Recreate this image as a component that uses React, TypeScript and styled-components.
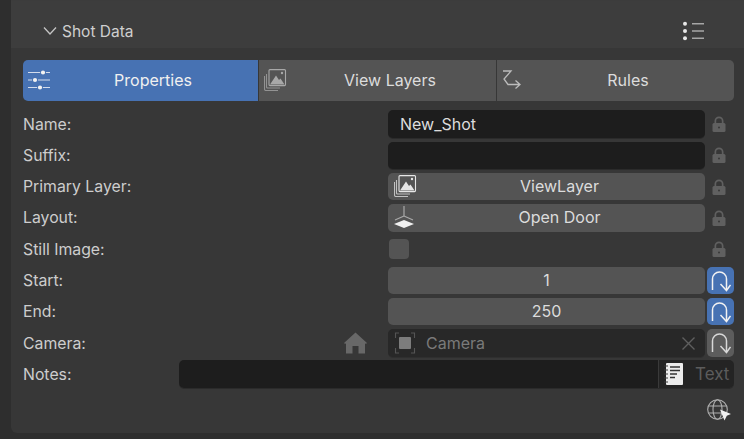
import React from 'react'
import styled, { createGlobalStyle } from 'styled-components'

const GlobalStyle = createGlobalStyle`
  html, body {
    margin: 0;
    padding: 0;
    background: #2e2e2e;
    overflow: hidden;
  }
  body {
    font-family: Inter, "Noto Sans", "Liberation Sans", sans-serif;
  }
`

const Page = styled.div`
  width: 744px;
  height: 439px;
  padding-left: 11px;
  box-sizing: border-box;
`

const Panel = styled.section`
  height: 433px;
  background: #373737;
  border-bottom-left-radius: 6px;
  border-top: 1px solid #3c3c3c;
  box-sizing: border-box;
`

const Header = styled.header`
  height: 47px;
  box-sizing: border-box;
  display: flex;
  align-items: center;
  background: #3d3d3d;
  padding: 13px 39px 0 32px;
  color: #cfcfcf;
  font-size: 15.5px;
  gap: 5px;
`

const HeaderTitle = styled.span`
  flex: 1;
`

const Body = styled.div`
  padding: 12px 10px 0 12px;
`

const Tabs = styled.div`
  display: grid;
  grid-template-columns: 235px 1fr 1fr;
  height: 41px;
  gap: 1px;
  margin-bottom: 9.4px;
`

const Tab = styled.div<{ $active?: boolean }>`
  display: grid;
  grid-template-columns: 20px 1fr;
  align-items: center;
  padding: 0 0 1px 5px;
  background: ${(p) => (p.$active ? '#4772b3' : '#545454')};
  color: ${(p) => (p.$active ? '#f0f0f0' : '#dcdcdc')};
  font-size: 16px;
  text-align: center;

  &:first-child {
    border-radius: 5px 0 0 5px;
  }
  &:last-child {
    border-radius: 0 5px 5px 0;
  }
`

const Rows = styled.div`
  display: flex;
  flex-direction: column;
  gap: 4px;
`

const Row = styled.div`
  display: grid;
  grid-template-columns: 365px 317px 1fr;
  height: 27.3px;
  align-items: center;
`

const NotesRow = styled.div`
  display: grid;
  grid-template-columns: 156px 1fr;
  height: 28px;
  margin-top: -0.5px;
  align-items: center;
`

const Label = styled.div`
  display: flex;
  justify-content: space-between;
  align-items: center;
  padding-right: 21px;
  color: #cdcdcd;
  font-size: 15.8px;
`

const TextField = styled.div`
  height: 100%;
  box-sizing: border-box;
  display: flex;
  align-items: center;
  padding: 0 12px 1px;
  background: #1d1d1d;
  border-radius: 5px;
  color: #dcdcdc;
  font-size: 16px;
  box-shadow: 0 1px 0 #2b2b2b;
`

const ButtonField = styled.div`
  height: 100%;
  box-sizing: border-box;
  display: grid;
  grid-template-columns: 20px 1fr;
  align-items: center;
  padding: 0 0 1px 6px;
  background: #545454;
  border-radius: 5px;
  color: #dcdcdc;
  font-size: 16px;
  text-align: center;
`

const NumberField = styled(ButtonField)`
  display: flex;
  justify-content: center;
  padding: 0 0 1px;
`

const CameraField = styled.div`
  height: 100%;
  box-sizing: border-box;
  display: flex;
  align-items: center;
  padding: 0 10px 0 6px;
  gap: 10px;
  background: #282828;
  border-radius: 5px;
  color: #7a7a7a;
  font-size: 16px;
  box-shadow: 0 1px 0 #2f2f2f;
`

const CameraName = styled.span`
  flex: 1;
`

const Checkbox = styled.div`
  width: 20px;
  height: 20px;
  margin-left: 1px;
  background: #545454;
  border-radius: 4px;
`

const LockCell = styled.div`
  display: flex;
  justify-content: center;
  padding-right: 1px;
`

const Decorator = styled.div<{ $active?: boolean }>`
  width: 27px;
  height: 100%;
  margin-left: 2px;
  display: flex;
  align-items: center;
  justify-content: center;
  background: ${(p) => (p.$active ? '#4772b3' : '#5c5c5c')};
  border-radius: 5px;
`

const NotesField = styled.div`
  height: 100%;
  display: flex;
  border-radius: 5px;
  overflow: hidden;
  box-shadow: 0 1px 0 #2b2b2b;
`

const NotesInput = styled.div`
  flex: 1;
  background: #1d1d1d;
`

const NotesBlock = styled.div`
  width: 76px;
  box-sizing: border-box;
  display: flex;
  align-items: center;
  gap: 12px;
  padding-left: 5px;
  background: #242424;
  border-left: 1px solid #3a3a3a;
  color: #5c5c5c;
  font-size: 17px;
`

const Footer = styled.div`
  display: flex;
  justify-content: flex-end;
  padding: 11px 3px 0 0;
`

const Svg = styled.svg`
  display: block;
`

const Chevron = () => (
  <Svg width="14" height="10" viewBox="0 0 14 10" fill="none" stroke="#c4c4c4" strokeWidth="1.3">
    <path d="M1 1.5 L7 8 L13 1.5" />
  </Svg>
)

const MenuIcon = () => (
  <Svg width="22" height="20" viewBox="0 0 22 20" fill="none" stroke="#a6a6a6" strokeWidth="1.4">
    <circle cx="2" cy="2.7" r="2" fill="#e8e8e8" stroke="none" />
    <circle cx="2" cy="10" r="2" fill="#e8e8e8" stroke="none" />
    <circle cx="2" cy="17.3" r="2" fill="#e8e8e8" stroke="none" />
    <path d="M9 2.7 H21 M9 10 H21 M9 17.3 H21" />
  </Svg>
)

const SlidersIcon = () => (
  <Svg width="22" height="20" viewBox="0 0 22 20" fill="none" stroke="#d3dcec" strokeWidth="1">
    <path d="M0 2.5 H12 M18 2.5 H22 M0 10 H4 M10 10 H22 M0 17.5 H9 M15 17.5 H22" />
    <circle cx="15" cy="2.5" r="2.1" fill="#f2f2f2" stroke="none" />
    <circle cx="7" cy="10" r="2.1" fill="#f2f2f2" stroke="none" />
    <circle cx="12" cy="17.5" r="2.1" fill="#f2f2f2" stroke="none" />
  </Svg>
)

const LayersIcon = ({ color }: { color: string }) => (
  <Svg width="23" height="22" viewBox="0 0 23 22" fill="none" stroke={color} strokeWidth="1.1">
    <path d="M2.5 5 V18 Q2.5 19 3.5 19 H16" opacity="0.75" />
    <path d="M0.5 7 V20 Q0.5 21.5 2 21.5 H14" opacity="0.75" />
    <rect x="5" y="0.6" width="16.5" height="16" rx="1" />
    <path d="M6 15.5 L12 6.5 L15 11 L16.5 9.5 L20.5 15.5 Z" fill={color} stroke="none" />
    <circle cx="18" cy="4" r="1.2" fill={color} stroke="none" />
  </Svg>
)

const RulesIcon = () => (
  <Svg width="20" height="20" viewBox="0 0 20 20" fill="none" stroke="#bcbcbc" strokeWidth="1.3">
    <path d="M1 1 H9 L2 9 L6 14.5 H18 M13.5 10.5 L18 14.5 L13.5 18.5" />
  </Svg>
)

const LockIcon = () => (
  <Svg width="14" height="16" viewBox="0 0 14 16">
    <path
      d="M2.5 7 V5 a4.5 4.5 0 0 1 9 0 V7 H9.8 V5 a2.8 2.8 0 0 0 -5.6 0 V7 Z"
      fill="#606060"
    />
    <rect x="0.5" y="7" width="13" height="9" rx="1.5" fill="#606060" />
    <circle cx="7" cy="11.5" r="1" fill="#373737" />
  </Svg>
)

const LayoutIcon = () => (
  <Svg width="20" height="22" viewBox="0 0 20 22" fill="none" stroke="#a9a9a9" strokeWidth="1.2">
    <path d="M10 0 V10 M10 10 L1 14 M10 10 L19 14" />
    <path d="M10 14 L20 18 L10 22 L0 18 Z" fill="#f0f0f0" stroke="none" />
  </Svg>
)

const ArchIcon = ({ color }: { color: string }) => (
  <Svg width="20" height="22" viewBox="0 0 20 22" fill="none" stroke={color} strokeWidth="1.5">
    <path d="M1.5 20 V9 a7 7 0 0 1 14 0 V20" />
    <path d="M9.5 14 L15.5 20.5 L19.5 15" />
  </Svg>
)

const HomeIcon = () => (
  <Svg width="23" height="22" viewBox="0 0 23 22">
    <path
      d="M11.5 0.5 L23 11 Q22.5 12 21 11.5 V21.5 H14.5 V14 H8.5 V21.5 H2 V11.5 Q0.5 12 0 11 Z"
      fill="#686868"
    />
  </Svg>
)

const CameraIcon = () => (
  <Svg width="22" height="22" viewBox="0 0 22 22" fill="none" stroke="#555" strokeWidth="1.1">
    <path d="M5 1 H1.5 V6 M17 1 H20.5 V6 M5 21 H1.5 V16 M17 21 H20.5 V16" />
    <rect x="5" y="5" width="12" height="12" rx="1" fill="#7c7c7c" stroke="none" />
  </Svg>
)

const CloseIcon = () => (
  <Svg width="13" height="13" viewBox="0 0 13 13" fill="none" stroke="#5f5f5f" strokeWidth="1.4">
    <path d="M0.5 0.5 L12.5 12.5 M12.5 0.5 L0.5 12.5" />
  </Svg>
)

const NotebookIcon = () => (
  <Svg width="19" height="22" viewBox="0 0 19 22">
    <rect x="2" y="0" width="17" height="22" rx="1" fill="#ececec" />
    <path d="M0 3 H4 M0 7 H4 M0 11 H4 M0 15 H4 M0 19 H4" stroke="#3a3a3a" strokeWidth="1.2" />
    <path d="M6 4 H16 M6 7.5 H16 M6 11 H13 M6 14.5 H11" stroke="#333" strokeWidth="1.5" />
  </Svg>
)

const GlobeIcon = () => (
  <Svg width="24" height="22" viewBox="0 0 24 22" fill="none" stroke="#b0b0b0" strokeWidth="1.1">
    <circle cx="10.5" cy="10.5" r="9.8" />
    <ellipse cx="10.5" cy="10.5" rx="4.5" ry="9.8" />
    <path d="M1.5 7 H19.5 M1.5 14 H14" />
    <path d="M13 10.5 L24 15 L19.8 16.8 L17.5 21.5 Z" fill="#f0f0f0" stroke="none" />
  </Svg>
)

const App: React.FC = () => (
  <Page>
    <GlobalStyle />
    <Panel>
      <Header>
        <Chevron />
        <HeaderTitle>Shot Data</HeaderTitle>
        <MenuIcon />
      </Header>
      <Body>
        <Tabs>
          <Tab $active>
            <SlidersIcon />
            <span>Properties</span>
          </Tab>
          <Tab>
            <LayersIcon color="#a8a8a8" />
            <span>View Layers</span>
          </Tab>
          <Tab>
            <RulesIcon />
            <span>Rules</span>
          </Tab>
        </Tabs>
        <Rows>
          <Row>
            <Label>Name:</Label>
            <TextField>New_Shot</TextField>
            <LockCell>
              <LockIcon />
            </LockCell>
          </Row>
          <Row>
            <Label>Suffix:</Label>
            <TextField />
            <LockCell>
              <LockIcon />
            </LockCell>
          </Row>
          <Row>
            <Label>Primary Layer:</Label>
            <ButtonField>
              <LayersIcon color="#e6e6e6" />
              <span>ViewLayer</span>
            </ButtonField>
            <LockCell>
              <LockIcon />
            </LockCell>
          </Row>
          <Row>
            <Label>Layout:</Label>
            <ButtonField>
              <LayoutIcon />
              <span>Open Door</span>
            </ButtonField>
            <LockCell>
              <LockIcon />
            </LockCell>
          </Row>
          <Row>
            <Label>Still Image:</Label>
            <Checkbox />
            <LockCell>
              <LockIcon />
            </LockCell>
          </Row>
          <Row>
            <Label>Start:</Label>
            <NumberField>1</NumberField>
            <Decorator $active>
              <ArchIcon color="#f2f2f2" />
            </Decorator>
          </Row>
          <Row>
            <Label>End:</Label>
            <NumberField>250</NumberField>
            <Decorator $active>
              <ArchIcon color="#f2f2f2" />
            </Decorator>
          </Row>
          <Row>
            <Label>
              Camera:
              <HomeIcon />
            </Label>
            <CameraField>
              <CameraIcon />
              <CameraName>Camera</CameraName>
              <CloseIcon />
            </CameraField>
            <Decorator>
              <ArchIcon color="#d8d8d8" />
            </Decorator>
          </Row>
          <NotesRow>
            <Label>Notes:</Label>
            <NotesField>
              <NotesInput />
              <NotesBlock>
                <NotebookIcon />
                <span>Text</span>
              </NotesBlock>
            </NotesField>
          </NotesRow>
        </Rows>
        <Footer>
          <GlobeIcon />
        </Footer>
      </Body>
    </Panel>
  </Page>
)

export default App
